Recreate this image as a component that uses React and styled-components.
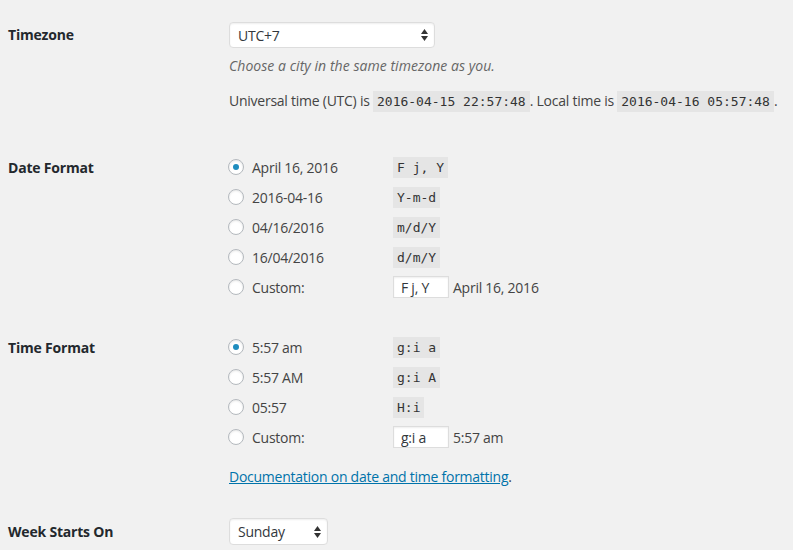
import React from 'react';
import styled, { createGlobalStyle } from 'styled-components';

const GlobalStyle = createGlobalStyle`
  html, body {
    margin: 0;
    background: #f1f1f1;
  }
  body {
    font-family: "Open Sans", "Liberation Sans", sans-serif;
    font-size: 14px;
    letter-spacing: -0.25px;
    color: #444;
  }
`;

const Page = styled.div`
  padding: 7px 0 0 8px;
`;

const Row = styled.div`
  display: grid;
  grid-template-columns: 221px 1fr;
  padding: 15px 0;
`;

const Label = styled.div`
  font-weight: 700;
  letter-spacing: -0.2px;
  color: #23282d;
  line-height: ${(p) => p.$lh}px;
  padding-top: ${(p) => p.$pt || 0}px;
`;

const Field = styled.div`
  display: flex;
  flex-direction: column;
  align-items: flex-start;
`;

const SelectWrap = styled.div`
  position: relative;
  width: ${(p) => p.$w}px;
  height: ${(p) => p.$h}px;
`;

const Select = styled.select`
  appearance: none;
  -webkit-appearance: none;
  width: 100%;
  height: 100%;
  box-sizing: border-box;
  border: 1px solid #ddd;
  border-radius: 4px;
  background: #fff;
  box-shadow: inset 0 1px 2px rgba(0, 0, 0, 0.07);
  font-family: "Open Sans", "Liberation Sans", sans-serif;
  font-size: 14px;
  letter-spacing: -0.25px;
  color: #32373c;
  padding: 0 8px;
  outline: none;
`;

const Arrows = styled.svg`
  position: absolute;
  right: 7px;
  top: 50%;
  transform: translateY(-50%);
  pointer-events: none;
`;

const Description = styled.p`
  margin: 7px 0 0;
  font-style: italic;
  letter-spacing: 0.05px;
  color: #666;
  line-height: 21px;
`;

const Para = styled.p`
  margin: ${(p) => p.$m};
  line-height: 23px;
`;

const Code = styled.code`
  font-family: "DejaVu Sans Mono", "Liberation Mono", monospace;
  font-size: 13px;
  letter-spacing: 0;
  background: #e5e5e5;
  color: #333;
  padding: 2px 4px;
  line-height: 17px;
  display: inline-block;
`;

const Option = styled.label`
  display: flex;
  align-items: center;
  height: 30px;
`;

const Radio = styled.span`
  width: 16px;
  height: 16px;
  box-sizing: border-box;
  border-radius: 50%;
  border: 1px solid #b4b9be;
  background: #fff;
  box-shadow: inset 0 1px 2px rgba(0, 0, 0, 0.1);
  margin: 0 8px 0 -1px;
  display: flex;
  align-items: center;
  justify-content: center;
  &::after {
    content: '';
    width: 6px;
    height: 6px;
    border-radius: 50%;
    background: ${(p) => (p.$checked ? '#1e8cbe' : 'transparent')};
  }
`;

const OptionText = styled.span`
  width: 141px;
  color: #444;
`;

const SmallInput = styled.input`
  width: 56px;
  height: 22px;
  box-sizing: border-box;
  border: 1px solid #ddd;
  background: #fff;
  box-shadow: inset 0 1px 2px rgba(0, 0, 0, 0.07);
  font-family: "Open Sans", "Liberation Sans", sans-serif;
  font-size: 14px;
  letter-spacing: -0.25px;
  color: #32373c;
  padding: 0 7px;
  margin: 0 4px 0 0;
  outline: none;
`;

const DocLink = styled.a`
  color: #0073aa;
  text-decoration: underline;
`;

const SelectBox = ({ w, h, value }) => (
  <SelectWrap $w={w} $h={h}>
    <Select defaultValue={value}>
      <option>{value}</option>
    </Select>
    <Arrows width="7" height="12" viewBox="0 0 7 12">
      <path d="M3.5 0 L7 5 L0 5 Z" fill="#333" />
      <path d="M0 7 L7 7 L3.5 12 Z" fill="#333" />
    </Arrows>
  </SelectWrap>
);

const RadioRow = ({ checked, text, code, custom, preview }) => (
  <Option>
    <Radio $checked={checked} />
    <OptionText>{text}</OptionText>
    {custom ? (
      <>
        <SmallInput defaultValue={custom} />
        <span>{preview}</span>
      </>
    ) : (
      <Code>{code}</Code>
    )}
  </Option>
);

const dateFormats = [
  { text: 'April 16, 2016', code: 'F j, Y', checked: true },
  { text: '2016-04-16', code: 'Y-m-d' },
  { text: '04/16/2016', code: 'm/d/Y' },
  { text: '16/04/2016', code: 'd/m/Y' },
];

const timeFormats = [
  { text: '5:57 am', code: 'g:i a', checked: true },
  { text: '5:57 AM', code: 'g:i A' },
  { text: '05:57', code: 'H:i' },
];

export default function App() {
  return (
    <Page>
      <GlobalStyle />
      <Row>
        <Label $lh={26}>Timezone</Label>
        <Field>
          <SelectBox w={206} h={26} value="UTC+7" />
          <Description>Choose a city in the same timezone as you.</Description>
          <Para $m="13px 0 10px">
            Universal time (UTC) is <Code>2016-04-15 22:57:48</Code>. Local time is{' '}
            <Code>2016-04-16 05:57:48</Code>.
          </Para>
        </Field>
      </Row>
      <Row>
        <Label $lh={30} $pt={1}>Date Format</Label>
        <Field>
          {dateFormats.map((f) => (
            <RadioRow key={f.code} {...f} />
          ))}
          <RadioRow text="Custom:" custom="F j, Y" preview="April 16, 2016" />
        </Field>
      </Row>
      <Row>
        <Label $lh={30} $pt={1}>Time Format</Label>
        <Field>
          {timeFormats.map((f) => (
            <RadioRow key={f.code} {...f} />
          ))}
          <RadioRow text="Custom:" custom="g:i a" preview="5:57 am" />
          <Para $m="13px 0 0">
            <DocLink href="#">Documentation on date and time formatting</DocLink>.
          </Para>
        </Field>
      </Row>
      <Row>
        <Label $lh={27}>Week Starts On</Label>
        <Field>
          <SelectBox w={99} h={27} value="Sunday" />
        </Field>
      </Row>
    </Page>
  );
}
